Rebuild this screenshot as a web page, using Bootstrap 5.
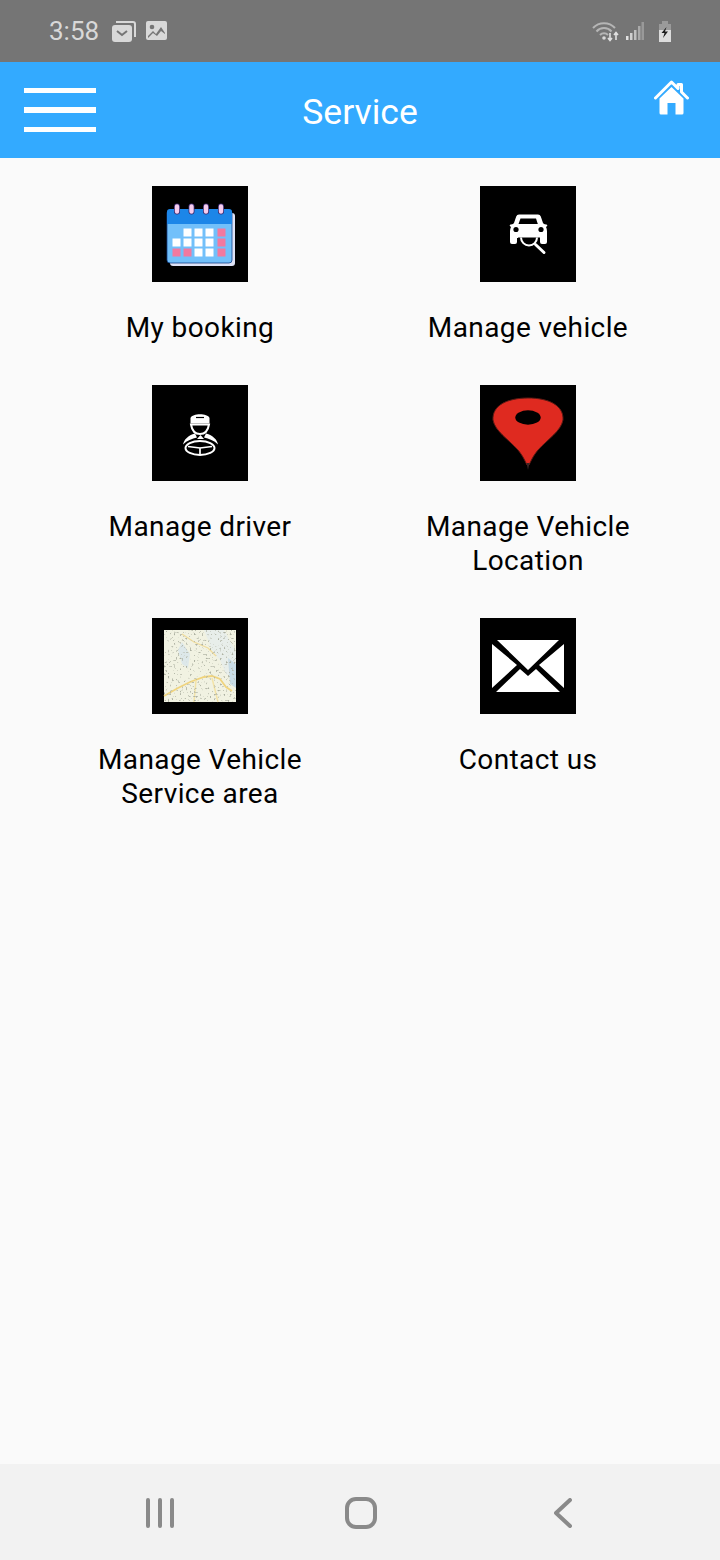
<!DOCTYPE html>
<html lang="en">
<head>
<meta charset="utf-8">
<title>Service</title>
<link href="https://cdn.jsdelivr.net/npm/bootstrap@5.3.0/dist/css/bootstrap.min.css" rel="stylesheet">
<style>
html,body{height:100%;}
body{font-family:Roboto,"Liberation Sans",sans-serif;background:#fafafa;color:#000;}
.app-shell{height:1560px;width:720px;}
.status-strip{height:62px;background:#757575;color:#d8d8d8;font-size:26px;padding:0 48px 0 49px;}
.status-strip svg{display:block;}
.time-label{line-height:1;width:51px;margin-right:12px;}
.gap-picture{margin-left:10px;}
.gap-signal{margin-left:7px;}
.gap-battery{margin-left:14px;}
.head-bar{height:96px;background:#33aaff;color:#fff;padding:0 24px;}
.burger{width:72px;gap:14px;flex:none;}
.burger span{display:block;height:5.33px;background:#fff;}
.head-title{font-size:35.5px;line-height:1;margin-top:6px;}
.home-slot{width:72px;flex:none;padding-right:7px;margin-top:-25px;}
.home-slot svg{display:block;}
.tile-grid{padding:28px 28px 0 36px;}
.tile-icon{width:96px;height:96px;background:#000;display:block;}
.tile-label{font-size:28px;letter-spacing:.4px;line-height:34px;margin-top:29px;padding-bottom:40px;}
.soft-nav{height:96px;background:#f2f2f2;padding:2px 0 0 146px;}
.soft-nav svg{display:block;}
.nav-home{margin-left:171px;}
.nav-back{margin-left:177px;}
</style>
</head>
<body>
<div class="app-shell d-flex flex-column">
  <div class="status-strip d-flex align-items-center">
    <span class="time-label">3:58</span>
    <svg width="24" height="21" viewBox="0 0 24 21"><path d="M4 0h17a3 3 0 0 1 3 3v13h-2V3a1 1 0 0 0-1-1H4z" fill="#d8d8d8"/><rect x="0" y="4" width="20" height="17" rx="3" fill="#d8d8d8"/><path d="M5 10l5 4 5-4" fill="none" stroke="#757575" stroke-width="2"/></svg>
    <svg width="21" height="20" viewBox="0 0 21 20" class="gap-picture"><rect width="21" height="19" rx="2" fill="#d8d8d8"/><circle cx="6" cy="6" r="2.300" fill="#757575"/><path d="M2 15l5-5 3 3 5-7 4 6v1l-4-3-4 5-4-3-5 5z" fill="#757575"/></svg>
    <div class="ms-auto d-flex align-items-center">
      <svg width="27" height="21" viewBox="0 0 27 21"><g fill="none" stroke="#b5b5b5" stroke-width="2"><path d="M1 7a15 15 0 0 1 22 0"/><path d="M4.500 10.500a10 10 0 0 1 15 0"/><path d="M8 14a5.500 5.500 0 0 1 8 0"/></g><circle cx="12" cy="17" r="1.800" fill="#d8d8d8"/><path d="M18 12v7M16 17l2 2.500 2-2.500" fill="none" stroke="#e0e0e0" stroke-width="1.600"/><path d="M24 19v-7M22 14l2-2.500 2 2.500" fill="none" stroke="#e0e0e0" stroke-width="1.600"/></svg>
      <svg width="18" height="18" viewBox="0 0 18 18" class="gap-signal"><rect x="0" y="14" width="2.500" height="4" fill="#e0e0e0"/><rect x="4" y="11" width="2.500" height="7" fill="#d0d0d0"/><rect x="8" y="8" width="2.500" height="10" fill="#c0c0c0"/><rect x="12" y="4" width="2.500" height="14" fill="#aaa"/><rect x="15.500" y="0" width="2.500" height="18" fill="#999"/></svg>
      <svg width="14" height="21" viewBox="0 0 14 21" class="gap-battery"><path d="M4 0h6v3h3v7H1V3h3z" fill="#9a9a9a"/><rect x="1" y="9" width="12" height="12" fill="#dcdcdc"/><path d="M8.500 6L3.500 12h3l-1.500 5 5-6.500H7z" fill="#1c1c1c"/></svg>
    </div>
  </div>

  <header class="head-bar d-flex align-items-center">
    <div class="burger d-flex flex-column"><span></span><span></span><span></span></div>
    <div class="head-title flex-grow-1 text-center">Service</div>
    <div class="home-slot d-flex justify-content-end">
      <svg width="35" height="35" viewBox="0 0 35 35"><path d="M1.500 18L17.500 2 24 8.500V4.500h3.500v7.500l6 6" fill="none" stroke="#fff" stroke-width="3" stroke-linecap="round" stroke-linejoin="round"/><path d="M5.500 18.500L17.500 7l12 11.500V33a1.500 1.500 0 0 1-1.500 1.500h-6.500V23h-8v11.500H7A1.500 1.500 0 0 1 5.500 33z" fill="#fff"/></svg>
    </div>
  </header>

  <main class="tile-grid flex-grow-1">
    <div class="row g-0">
      <div class="col-6 d-flex flex-column align-items-center text-center">
        <svg class="tile-icon" viewBox="0 0 96 96">
          <rect x="18" y="27" width="65" height="53" rx="3" fill="#dfe3f7"/>
          <rect x="15" y="24" width="65" height="53" rx="3" fill="#72c0fa" stroke="#14418c" stroke-width=".8"/>
          <path d="M15 38V26a3 3 0 0 1 3-3h59a3 3 0 0 1 3 3v12z" fill="#1c86e8"/>
          <g stroke="#3a2a70" stroke-width="6" stroke-linecap="round"><path d="M25 20.500v5M39.500 20.500v5M54 20.500v5M69 20.500v5"/></g>
          <g stroke="#f7cdee" stroke-width="4.400" stroke-linecap="round"><path d="M25 20.500v5M39.500 20.500v5M54 20.500v5M69 20.500v5"/></g>
          <g fill="#fff">
            <rect x="31.500" y="42.500" width="8" height="8"/><rect x="42.500" y="42.500" width="8" height="8"/><rect x="53.500" y="42.500" width="8" height="8"/>
            <rect x="20.500" y="52.500" width="8" height="8"/><rect x="31.500" y="52.500" width="8" height="8"/><rect x="42.500" y="52.500" width="8" height="8"/><rect x="53.500" y="52.500" width="8" height="8"/>
            <rect x="42.500" y="62.500" width="8" height="8"/><rect x="53.500" y="62.500" width="8" height="8"/>
          </g>
          <g fill="#f2799f">
            <rect x="65.500" y="42.500" width="8" height="8"/><rect x="65.500" y="52.500" width="8" height="8"/><rect x="65.500" y="62.500" width="8" height="8"/>
            <rect x="20.500" y="62.500" width="8" height="8"/><rect x="31.500" y="62.500" width="8" height="8"/>
          </g>
        </svg>
        <div class="tile-label">My booking</div>
      </div>
      <div class="col-6 d-flex flex-column align-items-center text-center">
        <svg class="tile-icon" viewBox="0 0 96 96">
          <path d="M38 28.500h20a3 3 0 0 1 2.800 2L63 37l1 1 2 .5a1 1 0 0 1 .5 2l-.5.500c1 2 1 4 1 6v9a2 2 0 0 1-2 2h-3a2 2 0 0 1-2-2v-4H37v4a2 2 0 0 1-2 2h-3a2 2 0 0 1-2-2v-9c0-2 0-4 1-6l-.5-.5a1 1 0 0 1 .5-2l2-.5 1-1 2.200-6.500a3 3 0 0 1 2.800-2z" fill="#fff"/>
          <path d="M40.500 32.500h15.500l1.800 5.500H38.500z" fill="#000"/>
          <circle cx="36" cy="43.500" r="2.600" fill="#000"/><circle cx="61" cy="43.500" r="2.600" fill="#000"/>
          <path d="M38 51.500a11 11 0 0 0 22 0z" fill="#000"/>
          <path d="M41 51.500a8 8 0 0 0 16 0" fill="none" stroke="#fff" stroke-width="2"/>
          <path d="M55.500 58.500l8.500 8" stroke="#fff" stroke-width="3" stroke-linecap="round"/>
        </svg>
        <div class="tile-label">Manage vehicle</div>
      </div>
    </div>
    <div class="row g-0">
      <div class="col-6 d-flex flex-column align-items-center text-center">
        <svg class="tile-icon" viewBox="0 0 96 96">
          <path d="M38.500 33c2-5 17-5 19 0v5.500h-19z" fill="#fff"/>
          <path d="M44 32.500h8" stroke="#000" stroke-width="1.200"/>
          <path d="M39 39.500c1 6 4 9.500 9 9.500s8-3.500 9-9.500z" fill="#000" stroke="#fff" stroke-width="2"/>
          <path d="M31 59.500c1-5 5-9 12-11l2 4c-5 1-10 3-14 7z" fill="#fff"/>
          <path d="M66 59.500c-1-5-5-9-12-11l-2 4c5 1 10 3 14 7z" fill="#fff"/>
          <path d="M45 54h7l-3.500-4z" fill="#fff"/>
          <ellipse cx="48" cy="63" rx="14.500" ry="7" fill="none" stroke="#fff" stroke-width="2"/>
          <path d="M36 61.500l12 1.500 12-1.500M48 63v6" fill="none" stroke="#fff" stroke-width="1.700"/>
        </svg>
        <div class="tile-label">Manage driver</div>
      </div>
      <div class="col-6 d-flex flex-column align-items-center text-center">
        <svg class="tile-icon" viewBox="0 0 96 96">
          <path d="M48 13C68 13 84 20 83 35C81 46 68 54 58 65C53 71 51 76 49 80H47C45 76 43 71 38 65C28 54 15 46 13 35C12 20 28 13 48 13Z" fill="#df2a20" stroke="#5e1a14" stroke-width="1"/>
          <path d="M46.500 78L48 85L49.500 78z" fill="#3a2525"/>
          <ellipse cx="48" cy="32.500" rx="12.700" ry="7.200" fill="#000"/>
        </svg>
        <div class="tile-label">Manage Vehicle<br>Location</div>
      </div>
    </div>
    <div class="row g-0">
      <div class="col-6 d-flex flex-column align-items-center text-center">
        <svg class="tile-icon" viewBox="0 0 96 96">
          <defs><filter id="mapSpecks" x="0" y="0" width="1" height="1"><feTurbulence type="fractalNoise" baseFrequency=".5" numOctaves="2" seed="7"/><feColorMatrix type="matrix" values="0 0 0 0 .42  0 0 0 0 .44  0 0 0 0 .36  7 0 0 0 -4.200"/></filter></defs>
          <rect x="12" y="12" width="72" height="72" fill="#f1f2e2"/>
          <path d="M52 12h20l12 22v28l-10-6-6-14-8-10z" fill="#e8eeea"/>
          <path d="M30 24l8 12-2 14-6-4-4-14z" fill="#dde8ea"/>
          <path d="M76 40l8 6v24l-6-4z" fill="#c8dce6"/>
          <path d="M12 78l14-8 12-6 14-5 8-1 8 3 6 8 6 4" fill="none" stroke="#f0d47e" stroke-width="1.800"/>
          <path d="M30 16l12 8 14 6 8 8" fill="none" stroke="#f0dc9c" stroke-width="1.200"/>
          <path d="M60 60l4 16 2 8M44 62l-2 22" fill="none" stroke="#f3e3a8" stroke-width="1.500"/>
          <rect x="12" y="12" width="72" height="72" filter="url(#mapSpecks)"/>
        </svg>
        <div class="tile-label">Manage Vehicle<br>Service area</div>
      </div>
      <div class="col-6 d-flex flex-column align-items-center text-center">
        <svg class="tile-icon" viewBox="0 0 96 96">
          <path fill="#fff" d="M17 22H79L48 52zM12 26L37 47 12 70zM84 26L59 47 84 70zM16 74L40 51 48 58 56 51 80 74z"/>
        </svg>
        <div class="tile-label">Contact us</div>
      </div>
    </div>
  </main>

  <nav class="soft-nav d-flex align-items-center">
    <svg width="28" height="30" viewBox="0 0 28 30"><path d="M2 2v26M14 2v26M26 2v26" stroke="#8a8a8a" stroke-width="4" stroke-linecap="round"/></svg>
    <svg class="nav-home" width="32" height="32" viewBox="0 0 32 32"><rect x="2" y="2" width="28" height="28" rx="9" fill="none" stroke="#8a8a8a" stroke-width="4"/></svg>
    <svg class="nav-back" width="18" height="30" viewBox="0 0 18 30"><path d="M16 2L2 15l14 13" fill="none" stroke="#8a8a8a" stroke-width="4" stroke-linecap="round" stroke-linejoin="round"/></svg>
  </nav>
</div>
<script src="https://cdn.jsdelivr.net/npm/bootstrap@5.3.0/dist/js/bootstrap.bundle.min.js"></script>
</body>
</html>
